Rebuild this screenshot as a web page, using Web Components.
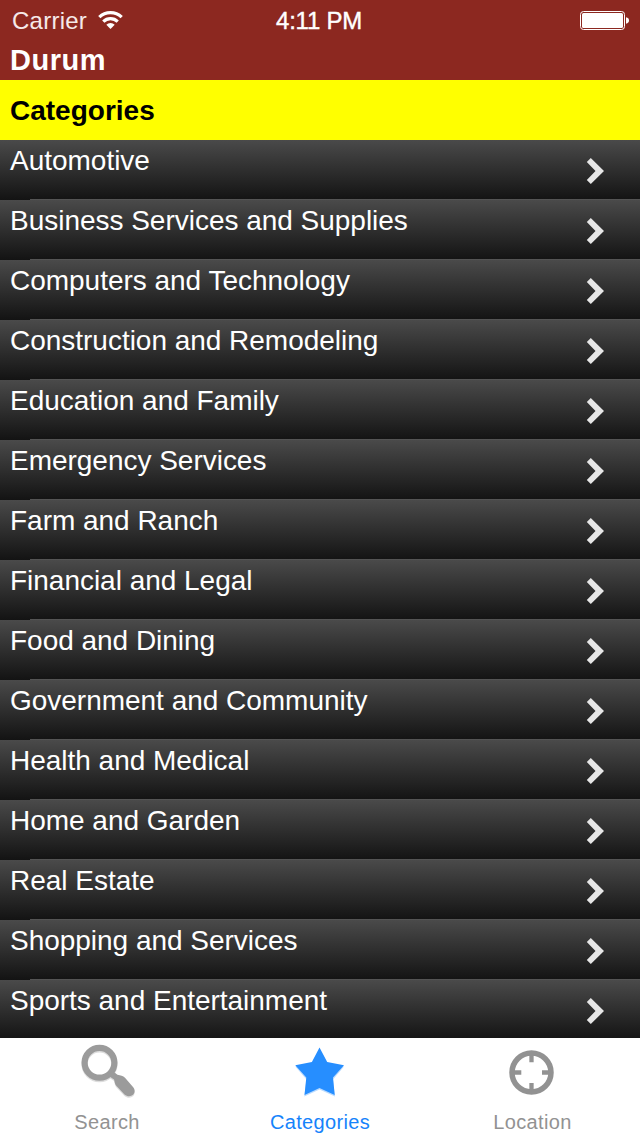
<!DOCTYPE html>
<html lang="en">
<head>
<meta charset="utf-8">
<title>Durum</title>
<style>
  html, body {
    margin: 0;
    height: 100%;
    overflow: hidden;
  }

  body {
    background: #fff;
    font-family: "Liberation Sans", Arial, sans-serif;
  }
</style>
</head>
<body>
<directory-app></directory-app>

<script>
/** <status-bar> — carrier, clock and battery. */
class StatusBar extends HTMLElement {
  constructor() {
    super();
    this.attachShadow({ mode: 'open' }).innerHTML = `
      <style>
        :host {
          display: grid;
          grid-template-columns: 1fr auto 1fr;
          align-items: center;
          height: 40px;
          padding: 0 11px 0 12px;
          color: #fff;
          font-size: 24px;
          line-height: 28px;
          box-sizing: border-box;
        }
        .carrier { display: flex; align-items: center; gap: 11px; padding-top: 2px; color: #f6e9e8; }
        .carrier span { letter-spacing: 0.25px; }
        .carrier svg { margin-top: -2px; }
        .time { padding: 2px 3px 0 0; letter-spacing: -0.25px; -webkit-text-stroke: 0.4px #fff; }
        .battery { justify-self: end; }
        svg { display: block; }
      </style>
      <div class="carrier">
        <span>Carrier</span>
        <svg width="25" height="18" viewBox="0 0 25 18" fill="none" stroke="#fff" stroke-width="3.2">
          <path d="M1.3 6.2a16 16 0 0 1 22.4 0"/>
          <path d="M5.3 10.6a10.2 10.2 0 0 1 14.4 0"/>
          <path d="M12.5 18 8.3 13.8a6 6 0 0 1 8.400 0z" fill="#fff" stroke="none"/>
        </svg>
      </div>
      <div class="time">4:11 PM</div>
      <svg class="battery" width="49" height="19" viewBox="0 0 49 19">
        <rect x=".5" y=".5" width="44" height="18" rx="3" fill="none" stroke="#fff"/>
        <rect x="2" y="2" width="41" height="15" rx="1.5" fill="#fff"/>
        <path d="M46 6.3c2 .3 3 1.6 3 3.2s-1 2.9-3 3.2z" fill="#fff"/>
      </svg>
    `;
  }
}

/** <category-row> — one list row, label passed in the slot. */
class CategoryRow extends HTMLElement {
  constructor() {
    super();
    this.attachShadow({ mode: 'open' }).innerHTML = `
      <style>
        :host {
          display: flex;
          justify-content: space-between;
          flex: none;
          height: 60px;
          padding: 0 36px 0 10px;
          box-sizing: border-box;
          color: #fff;
          font-size: 28px;
          line-height: 32px;
          letter-spacing: -0.02px;
          background:
            linear-gradient(#545454, #545454) 30px 100% / 100% 1px no-repeat,
            linear-gradient(#4a4a4a, #131313);
        }
        .label { padding-top: 5px; white-space: nowrap; }
        svg { display: block; margin-top: 18px; }
      </style>
      <div class="label"><slot></slot></div>
      <svg width="18" height="26" viewBox="0 0 18 26" fill="#e6e6e6">
        <path d="M4.8 0 18 13 4.8 26 .8 22l8.700-9L.8 4z"/>
      </svg>
    `;
  }
}

/** <tab-item> — icon in the "icon" slot, label in the default one. */
class TabItem extends HTMLElement {
  constructor() {
    super();
    this.attachShadow({ mode: 'open' }).innerHTML = `
      <style>
        :host {
          display: flex;
          flex-direction: column;
          align-items: center;
          color: #929292;
          font-size: 20px;
          line-height: 24px;
          letter-spacing: 0.35px;
        }
        :host([active]) { color: #1683fb; }
        ::slotted(svg) { display: block; }
        .label { margin-top: 12px; padding-left: 1px; }
      </style>
      <slot name="icon"></slot>
      <div class="label"><slot></slot></div>
    `;
  }
}

const CATEGORIES = [
  'Automotive',
  'Business Services and Supplies',
  'Computers and Technology',
  'Construction and Remodeling',
  'Education and Family',
  'Emergency Services',
  'Farm and Ranch',
  'Financial and Legal',
  'Food and Dining',
  'Government and Community',
  'Health and Medical',
  'Home and Garden',
  'Real Estate',
  'Shopping and Services',
  'Sports and Entertainment',
];

const GLASS_HANDLE = 'M31 37.5 35.500 33l5 3.800c3 .6 5.500 .9 7.500 2.900l8 9.300c5 6-2.500 12.500-8.500 7.500l-8-8.500c-1.800-2-1.800-4.500-2.500-6.500z';

class DirectoryApp extends HTMLElement {
  constructor() {
    super();
    this.attachShadow({ mode: 'open' }).innerHTML = `
      <style>
        :host {
          display: flex;
          flex-direction: column;
          width: 640px;
          height: 1136px;
        }
        header { height: 80px; background: #8c2820; flex: none; }
        h1, h2 { margin: 0; font-size: 28px; padding-left: 10px; }
        h1 { line-height: 40px; font-size: 29px; color: #fff; letter-spacing: 0.5px; }
        h2 { line-height: 61px; height: 60px; flex: none; background: #ff0; color: #000; }
        main { display: flex; flex-direction: column; flex: 1; min-height: 0; overflow: hidden; }
        nav {
          display: grid;
          grid-template-columns: 213px 213px 212px;
          flex: none;
          height: 98px;
          background: #fff;
        }
      </style>
      <header>
        <status-bar></status-bar>
        <h1>Durum</h1>
      </header>
      <h2>Categories</h2>
      <main>
        ${CATEGORIES.map((name) => `<category-row>${name}</category-row>`).join('')}
      </main>
      <nav>
        <tab-item>
          <svg slot="icon" width="60" height="60" viewBox="0 0 60 60">
            <g opacity=".3" transform="translate(0 1.5)">
              <circle cx="22.5" cy="24.8" r="14.9" fill="none" stroke="#929292" stroke-width="6.2"/>
              <path d="${GLASS_HANDLE}" fill="#929292"/>
            </g>
            <circle cx="22.5" cy="24.8" r="14.9" fill="none" stroke="#9b9b9b" stroke-width="6.2"/>
            <path d="${GLASS_HANDLE}" fill="#9b9b9b"/>
          </svg>
          Search
        </tab-item>
        <tab-item active>
          <svg slot="icon" width="60" height="60" viewBox="0 0 60 60">
            <path d="M29.5 11l7.5 14.5L54 28.500 43 41.500 45 58.500 29.500 51.500 14.300 58.500 16.500 41.500 5.300 28.500 22 25.500z" fill="#1683fb" opacity=".3"/>
            <path d="M29.5 9.5l7.700 14.500 16.800 3.200-11 12.300 1.700 17.500L29.500 50l-15 7 1.800-17.500-11-12.300L21.900 24z" fill="#268eff"/>
          </svg>
          Categories
        </tab-item>
        <tab-item>
          <svg slot="icon" width="60" height="60" viewBox="0 0 60 60" fill="none" stroke="#929292">
            <circle cx="29.5" cy="34.5" r="19.5" stroke-width="5.5"/>
            <path d="M29.5 17v7.300M29.500 45v7M12 34.500h7.300M40 34.500h7" stroke-width="4.3"/>
          </svg>
          Location
        </tab-item>
      </nav>
    `;
  }
}

customElements.define('status-bar', StatusBar);
customElements.define('category-row', CategoryRow);
customElements.define('tab-item', TabItem);
customElements.define('directory-app', DirectoryApp);
</script>
</body>
</html>
